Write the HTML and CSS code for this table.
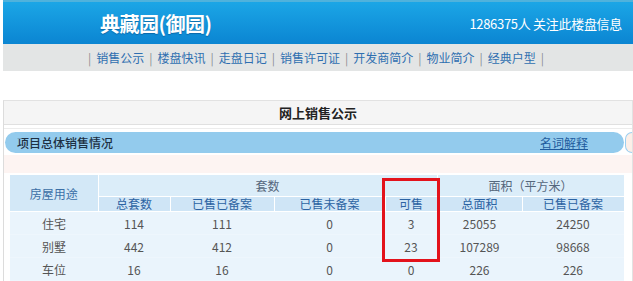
FILE: index.html
```html
<!DOCTYPE html>
<html lang="zh-CN">
<head>
<meta charset="utf-8">
<title>典藏园(御园)</title>
<link rel="stylesheet" href="styles.css">
</head>
<body>
<div class="page">
  <header class="top">
    <h1 class="title">典藏园(御园)</h1>
    <span class="fans">1286375人 关注此楼盘信息</span>
  </header>
  <nav class="nav">
    <span class="sep">|</span><a href="#">销售公示</a><span class="sep">|</span><a href="#">楼盘快讯</a><span class="sep">|</span><a href="#">走盘日记</a><span class="sep">|</span><a href="#">销售许可证</a><span class="sep">|</span><a href="#">开发商简介</a><span class="sep">|</span><a href="#">物业简介</a><span class="sep">|</span><a href="#">经典户型</a><span class="sep">|</span>
  </nav>
  <section class="box">
    <div class="box-title">网上销售公示</div>
    <div class="rule"></div>
    <div class="bar-row">
      <div class="pill">
        <span class="pill-text">项目总体销售情况</span>
        <a class="pill-link" href="#">名词解释</a>
      </div>
      <div class="pill-next"></div>
    </div>
    <div class="pink"></div>
    <div class="table-wrap">
      <table class="sales">
        <colgroup>
          <col class="c1"><col class="c2"><col class="c3"><col class="c4"><col class="c5"><col class="c6"><col class="c7">
        </colgroup>
        <thead>
          <tr class="h1">
            <th rowspan="2" class="use">房屋用途</th>
            <th colspan="4" class="grp">套数</th>
            <th colspan="2" class="grp">面积（平方米）</th>
          </tr>
          <tr class="h2">
            <th>总套数</th><th>已售已备案</th><th>已售未备案</th><th>可售</th><th>总面积</th><th>已售已备案</th>
          </tr>
        </thead>
        <tbody>
          <tr><td>住宅</td><td>114</td><td>111</td><td>0</td><td>3</td><td>25055</td><td>24250</td></tr>
          <tr><td>别墅</td><td>442</td><td>412</td><td>0</td><td>23</td><td>107289</td><td>98668</td></tr>
          <tr><td>车位</td><td>16</td><td>16</td><td>0</td><td>0</td><td>226</td><td>226</td></tr>
        </tbody>
      </table>
      <div class="mark"></div>
    </div>
  </section>
</div>
</body>
</html>
```
FILE: styles.css
```css
html, body {
  margin: 0;
  padding: 0;
  background: #fff;
  overflow: hidden;
}
body {
  font-family: "Noto Sans CJK SC", "Microsoft YaHei", sans-serif;
  color: #333;
}
.page {
  margin-left: 3px;
}
.top {
  height: 42px;
  border-top: 2px solid #4fb2dc;
  background: linear-gradient(#1ba6e6, #0b85d2);
  display: flex;
  align-items: center;
  justify-content: space-between;
  padding: 0 11px 0 97px;
  color: #fff;
}
.title {
  margin: 0;
  font-size: 20px;
  font-weight: bold;
  letter-spacing: -0.5px;
  text-shadow: 0 1px 1px rgba(0, 40, 90, 0.35);
}
.fans {
  font-size: 13px;
  letter-spacing: -0.3px;
}
.nav {
  height: 27px;
  background: #e3e5e5;
  display: flex;
  justify-content: center;
  align-items: center;
  font-size: 12px;
  padding-right: 4px;
}
.nav a {
  color: #2f6fb0;
  text-decoration: none;
}
.nav .sep {
  color: #8a8f94;
  margin: 0 5px;
}
.box {
  margin-top: 29px;
  width: 628px;
  border-top: 1px solid #e2e2e2;
  border-left: 1px solid #dcdcdc;
  border-right: 1px solid #e2e2e2;
}
.box-title {
  height: 23px;
  line-height: 23px;
  background: #f5f5f5;
  border-bottom: 1px solid #e0e0e0;
  text-align: center;
  font-size: 13px;
  font-weight: bold;
  color: #222;
}
.rule {
  margin-top: 3px;
  height: 1px;
  background: #ececec;
}
.bar-row {
  display: flex;
  margin-top: 3px;
}
.pill {
  margin-left: 1px;
  width: 621px;
  height: 21px;
  border-radius: 11px;
  background: #93cbed;
  display: flex;
  align-items: center;
  justify-content: space-between;
  padding: 0 36px 0 12px;
  box-sizing: border-box;
  font-size: 12px;
}
.pill-text {
  color: #1d2f42;
  font-weight: 500;
}
.pill-link {
  color: #1f5c9e;
  text-decoration: underline;
}
.pill-next {
  margin-left: 1px;
  width: 6px;
  height: 19px;
  border: 1px solid #9ccff0;
  border-right: none;
  border-radius: 10px 0 0 10px;
  background: #fcefe8;
}
.pink {
  margin-top: 2px;
  height: 18px;
  background: #fdf4f2;
}
.table-wrap {
  position: relative;
  margin-top: 2px;
  padding-left: 6px;
}
.sales {
  border-collapse: collapse;
  table-layout: fixed;
  width: 614px;
  font-size: 12px;
}
.c1 { width: 88px; }
.c2 { width: 72px; }
.c3 { width: 104px; }
.c4 { width: 111px; }
.c5 { width: 52px; }
.c6 { width: 85px; }
.c7 { width: 102px; }
.sales th {
  font-weight: normal;
  padding: 0;
  border: 1px solid #fff;
  border-top: none;
}
.sales th:first-child { border-left: none; }
.h1 th {
  height: 21px;
  background: #dbedf9;
  color: #55677c;
}
.h1 th.use {
  background: #d3e8f7;
  color: #3b6fa6;
}
.h2 th {
  height: 14px;
  line-height: 14px;
  background: #cfe5f6;
  color: #2c63a3;
}
.sales td {
  height: 22px;
  padding: 0;
  text-align: center;
  background: #eaf4fc;
  color: #555;
  border-bottom: 1px solid #eef6fd;
}
.mark {
  position: absolute;
  left: 378px;
  top: 3px;
  width: 52px;
  height: 78px;
  border: 3px solid #e3121b;
}
```
